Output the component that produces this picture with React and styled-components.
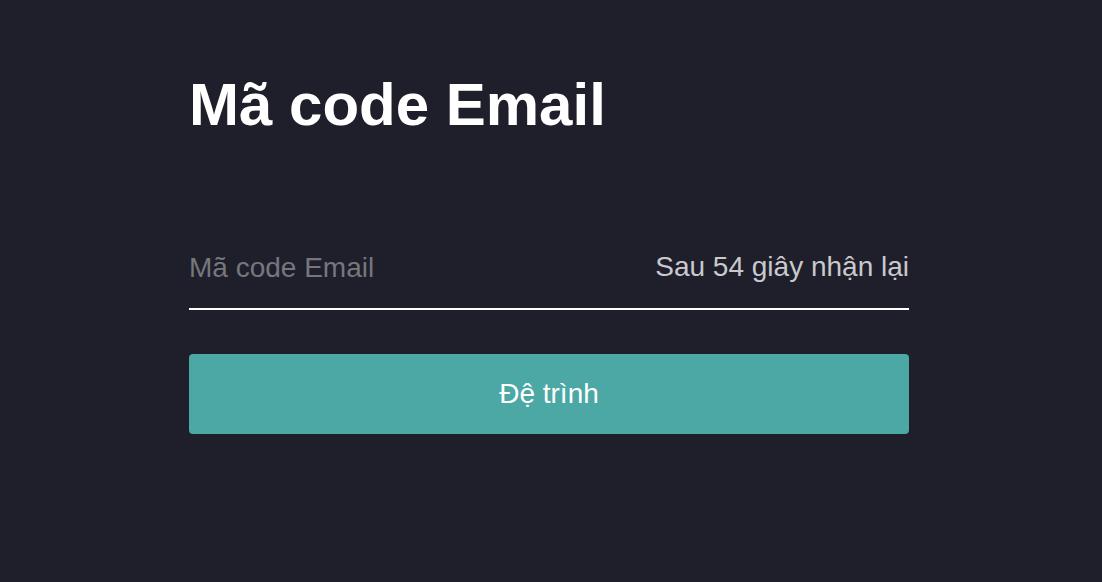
import React from 'react';
import styled, { createGlobalStyle } from 'styled-components';

const GlobalStyle = createGlobalStyle`
  html, body {
    margin: 0;
    padding: 0;
    background: #1e1f2a;
  }
  body {
    font-family: 'Liberation Sans', Arial, sans-serif;
  }
`;

const Page = styled.div`
  min-height: 582px;
  background: #1e1f2a;
  padding-left: 189px;
  box-sizing: border-box;
`;

const Form = styled.form`
  width: 720px;
  padding-top: 69px;
`;

const Title = styled.h1`
  margin: 0 0 87px;
  font-size: 60px;
  line-height: 72px;
  font-weight: 700;
  color: #ffffff;
`;

const Field = styled.div`
  display: flex;
  align-items: center;
  height: 80px;
  border-bottom: 2px solid #ffffff;
`;

const Input = styled.input`
  flex: 1;
  min-width: 0;
  border: none;
  outline: none;
  background: transparent;
  padding: 0;
  font-family: 'Liberation Sans', Arial, sans-serif;
  font-size: 28px;
  color: #ffffff;

  &::placeholder {
    color: #76767d;
  }
`;

const Resend = styled.span`
  font-size: 28px;
  color: #c9c9cd;
  margin-top: -3px;
  white-space: nowrap;
`;

const Submit = styled.button`
  display: block;
  width: 100%;
  height: 80px;
  margin-top: 44px;
  border: none;
  border-radius: 4px;
  background: #4ca8a4;
  color: #ffffff;
  font-family: 'Liberation Sans', Arial, sans-serif;
  font-size: 28px;
  cursor: pointer;
`;

const App = () => {
  return (
    <Page>
      <GlobalStyle />
      <Form onSubmit={(e) => e.preventDefault()}>
        <Title>Mã code Email</Title>
        <Field>
          <Input placeholder="Mã code Email" />
          <Resend>Sau 54 giây nhận lại</Resend>
        </Field>
        <Submit type="submit">Đệ trình</Submit>
      </Form>
    </Page>
  );
};

export default App;
